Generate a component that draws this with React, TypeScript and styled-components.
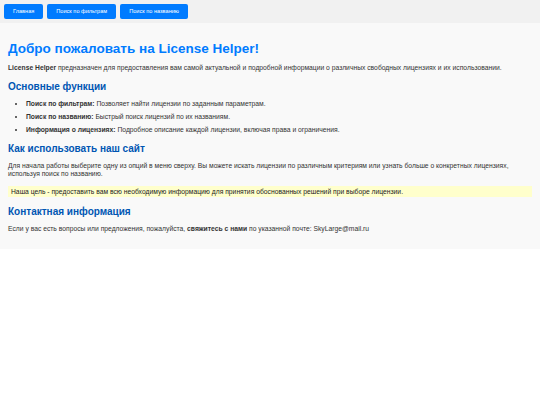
import React from "react";
import styled, { createGlobalStyle } from "styled-components";

const GlobalStyle = createGlobalStyle`
  html, body {
    margin: 0;
    padding: 0;
    background: #ffffff;
    font-family: "Liberation Sans", Arial, sans-serif;
    color: #333333;
  }
`;

const Header = styled.nav`
  display: flex;
  gap: 4px;
  padding: 4px;
  background: #f1f1f1;
`;

const NavButton = styled.button`
  background: #007bff;
  color: #ffffff;
  border: none;
  border-radius: 2px;
  height: 15px;
  padding: 0 9px;
  font-family: "Liberation Sans", Arial, sans-serif;
  font-size: 5.6px;
  line-height: 15px;
  cursor: pointer;
`;

const Main = styled.main`
  background: #f9f9f9;
  padding: 18px 8px 16px;
`;

const Title = styled.h1`
  margin: 0 0 7px;
  font-size: 13.5px;
  line-height: 16px;
  font-weight: bold;
  color: #007bff;
`;

const SectionTitle = styled.h2`
  margin: 9px 0 7.5px;
  font-size: 10px;
  line-height: 11.5px;
  font-weight: bold;
  color: #0056b3;
`;

const Paragraph = styled.p`
  margin: 0;
  font-size: 6.75px;
  line-height: 8px;
`;

const List = styled.ul`
  margin: 0;
  padding-left: 18px;
  font-size: 6.75px;
  line-height: 8px;
`;

const Item = styled.li`
  margin-bottom: 5px;
  &:last-child {
    margin-bottom: 0;
  }
`;

const Note = styled.p`
  margin: 8px 0 0;
  padding: 1.5px 3px;
  background: #ffffcc;
  font-size: 6.75px;
  line-height: 8px;
  color: #222222;
`;

export default function App() {
  return (
    <>
      <GlobalStyle />
      <Header>
        <NavButton>Главная</NavButton>
        <NavButton>Поиск по фильтрам</NavButton>
        <NavButton>Поиск по названию</NavButton>
      </Header>
      <Main>
        <Title>Добро пожаловать на License Helper!</Title>
        <Paragraph>
          <b>License Helper</b> предназначен для предоставления вам самой актуальной и подробной
          информации о различных свободных лицензиях и их использовании.
        </Paragraph>
        <SectionTitle>Основные функции</SectionTitle>
        <List>
          <Item>
            <b>Поиск по фильтрам:</b> Позволяет найти лицензии по заданным параметрам.
          </Item>
          <Item>
            <b>Поиск по названию:</b> Быстрый поиск лицензий по их названиям.
          </Item>
          <Item>
            <b>Информация о лицензиях:</b> Подробное описание каждой лицензии, включая права и
            ограничения.
          </Item>
        </List>
        <SectionTitle>Как использовать наш сайт</SectionTitle>
        <Paragraph>
          Для начала работы выберите одну из опций в меню сверху. Вы можете искать лицензии по
          различным критериям или узнать больше о конкретных лицензиях, используя поиск по названию.
        </Paragraph>
        <Note>
          Наша цель - предоставить вам всю необходимую информацию для принятия обоснованных решений
          при выборе лицензии.
        </Note>
        <SectionTitle>Контактная информация</SectionTitle>
        <Paragraph>
          Если у вас есть вопросы или предложения, пожалуйста, <b>свяжитесь с нами</b> по указанной
          почте: SkyLarge@mail.ru
        </Paragraph>
      </Main>
    </>
  );
}
